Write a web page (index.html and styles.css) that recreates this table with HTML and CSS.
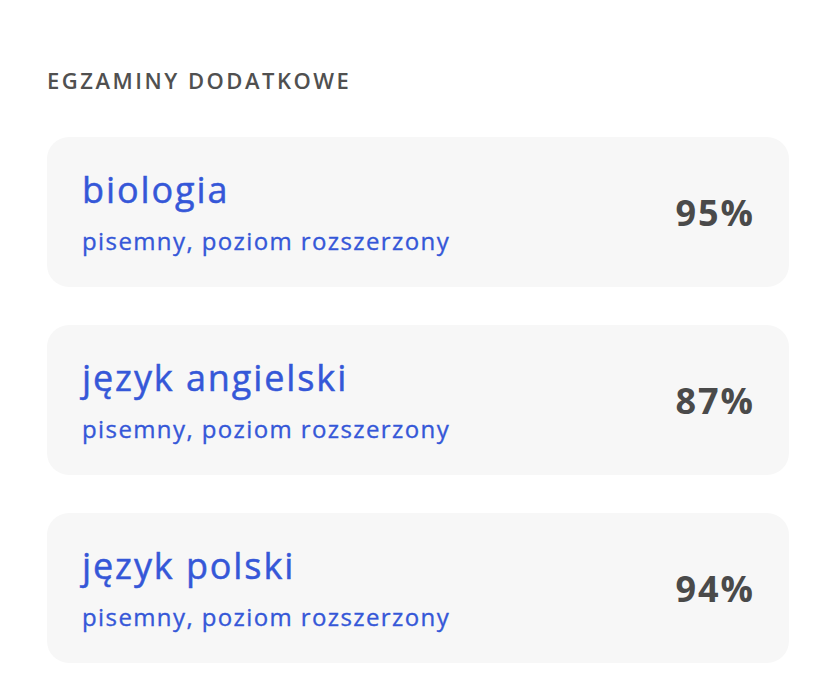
FILE: index.html
```html
<!DOCTYPE html>
<html lang="pl">
<head>
<meta charset="utf-8">
<link rel="stylesheet" href="styles.css">
</head>
<body>
<main class="page">
  <h2 class="section-title">EGZAMINY DODATKOWE</h2>
  <ul class="exam-list">
    <li class="exam-card">
      <div class="exam-info">
        <div class="exam-name">biologia</div>
        <div class="exam-type">pisemny, poziom rozszerzony</div>
      </div>
      <div class="exam-score">95%</div>
    </li>
    <li class="exam-card">
      <div class="exam-info">
        <div class="exam-name">język angielski</div>
        <div class="exam-type">pisemny, poziom rozszerzony</div>
      </div>
      <div class="exam-score">87%</div>
    </li>
    <li class="exam-card">
      <div class="exam-info">
        <div class="exam-name">język polski</div>
        <div class="exam-type">pisemny, poziom rozszerzony</div>
      </div>
      <div class="exam-score">94%</div>
    </li>
  </ul>
</main>
</body>
</html>
```

FILE: styles.css
```css
* { box-sizing: border-box; }
html, body {
  margin: 0;
  padding: 0;
  background: #ffffff;
}
body {
  font-family: "Open Sans", "Lato", sans-serif;
}
.page {
  padding: 65px 47px 0 47px;
}
.section-title {
  margin: 0 0 42px 0;
  font-size: 22px;
  font-weight: 600;
  letter-spacing: 2.5px;
  color: #505050;
  line-height: 30px;
}
.exam-list {
  list-style: none;
  margin: 0;
  padding: 0;
  display: flex;
  flex-direction: column;
  gap: 38px;
}
.exam-card {
  display: flex;
  align-items: center;
  justify-content: space-between;
  height: 150px;
  background: #f7f7f7;
  border-radius: 22px;
  padding: 0 34px 0 35px;
}
.exam-name {
  font-size: 36px;
  line-height: 44px;
  letter-spacing: 1.9px;
  color: #3557d8;
  -webkit-text-stroke: 0.5px #3557d8;
}
.exam-type {
  margin-top: 14px;
  font-size: 24px;
  line-height: 30px;
  letter-spacing: 1.4px;
  color: #3557d8;
  -webkit-text-stroke: 0.35px #3557d8;
}
.exam-score {
  font-size: 36px;
  font-weight: 700;
  letter-spacing: 2px;
  color: #4a4a4a;
}
```
